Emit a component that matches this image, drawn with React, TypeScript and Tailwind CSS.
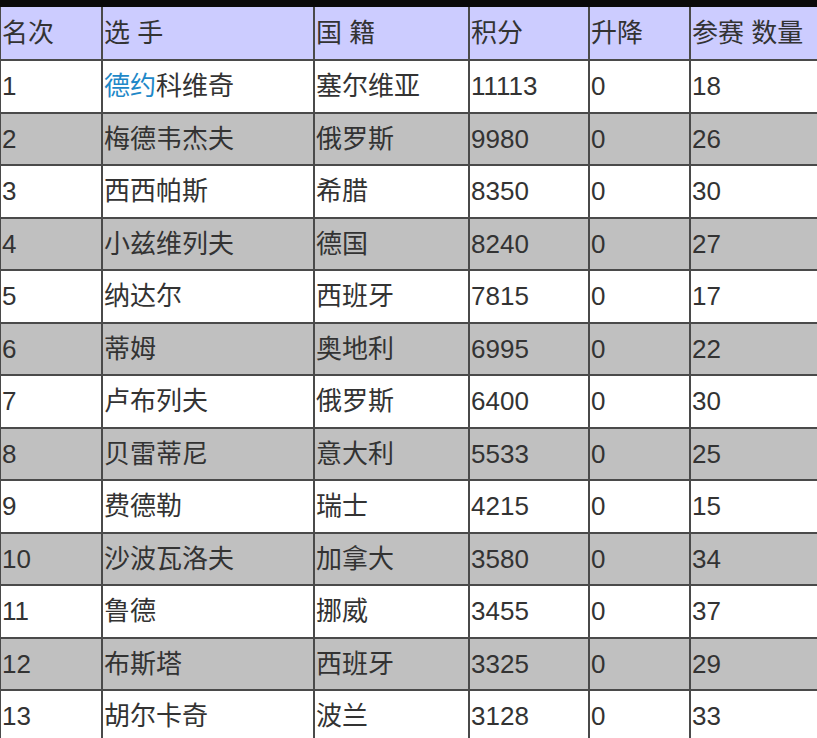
import React from "react";

const rows: [string, string, string, string, string, string][] = [
  ["1", "德约科维奇", "塞尔维亚", "11113", "0", "18"],
  ["2", "梅德韦杰夫", "俄罗斯", "9980", "0", "26"],
  ["3", "西西帕斯", "希腊", "8350", "0", "30"],
  ["4", "小兹维列夫", "德国", "8240", "0", "27"],
  ["5", "纳达尔", "西班牙", "7815", "0", "17"],
  ["6", "蒂姆", "奥地利", "6995", "0", "22"],
  ["7", "卢布列夫", "俄罗斯", "6400", "0", "30"],
  ["8", "贝雷蒂尼", "意大利", "5533", "0", "25"],
  ["9", "费德勒", "瑞士", "4215", "0", "15"],
  ["10", "沙波瓦洛夫", "加拿大", "3580", "0", "34"],
  ["11", "鲁德", "挪威", "3455", "0", "37"],
  ["12", "布斯塔", "西班牙", "3325", "0", "29"],
  ["13", "胡尔卡奇", "波兰", "3128", "0", "33"],
];

const headers = ["名次", "选 手", "国 籍", "积分", "升降", "参赛 数量"];

export default function App() {
  const cell =
    "border-x-2 border-y-2 border-[#4a4a4a] px-[1px] align-middle text-left font-normal whitespace-nowrap";
  return (
    <div className="w-[817px] h-[738px] overflow-hidden bg-white">
      <div className="h-[7px] bg-[#0a0a0a]" />
      <table
        className="border-collapse table-fixed text-[26px] leading-none text-[#333] -ml-[1px]"
        style={{ fontFamily: '"Liberation Sans", Arial, "Noto Sans CJK SC", sans-serif', width: "880px" }}
      >
        <colgroup>
          <col className="w-[102px]" />
          <col className="w-[212px]" />
          <col className="w-[155px]" />
          <col className="w-[120px]" />
          <col className="w-[101px]" />
          <col className="w-[190px]" />
        </colgroup>
        <thead>
          <tr className="h-[53px] bg-[#ccccff]">
            {headers.map((h, i) => (
              <th key={i} className={cell + " border-t-0"}>
                {h}
              </th>
            ))}
          </tr>
        </thead>
        <tbody>
          {rows.map((r, ri) => (
            <tr key={ri} className={"h-[52.5px] " + (ri % 2 === 1 ? "bg-[#c0c0c0]" : "bg-white")}>
              {r.map((c, ci) => (
                <td key={ci} className={cell}>
                  {ri === 0 && ci === 1 ? (
                    <>
                      <span className="text-[#1e88c8]">德约</span>科维奇
                    </>
                  ) : (
                    c
                  )}
                </td>
              ))}
            </tr>
          ))}
        </tbody>
      </table>
    </div>
  );
}
